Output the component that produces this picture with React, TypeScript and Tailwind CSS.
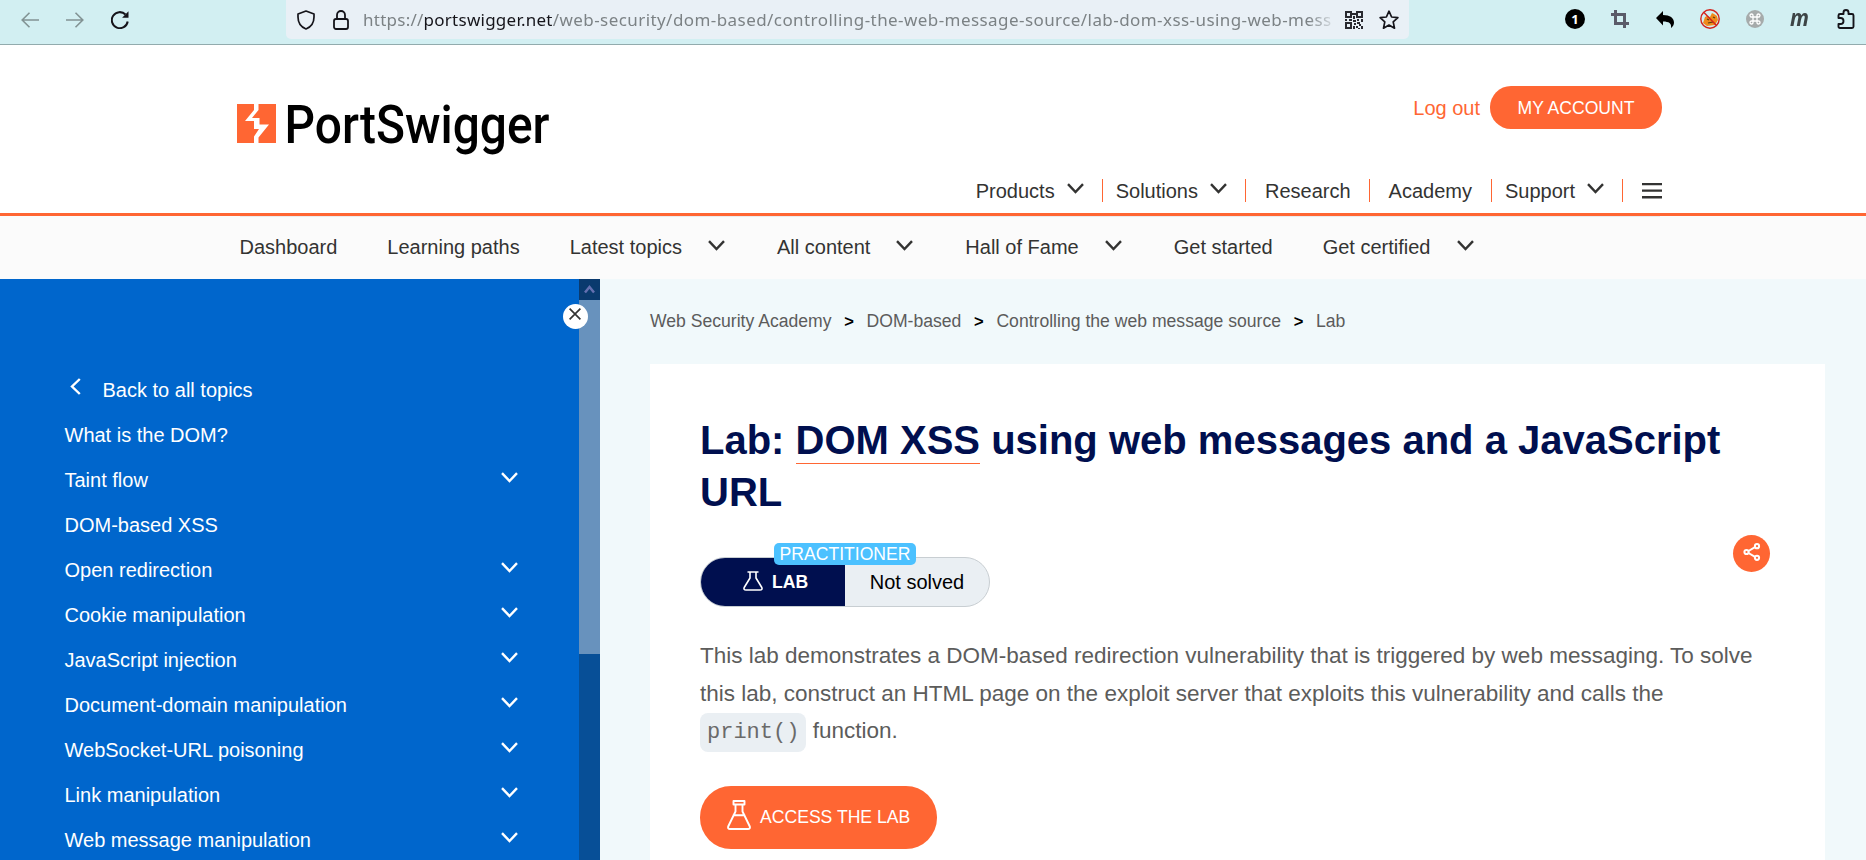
import React from "react";

const Chevron = ({ className = "" }: { className?: string }) => (
  <svg viewBox="0 0 17 11" className={`h-[11px] w-[17px] shrink-0 ${className}`} fill="none" stroke="currentColor" strokeWidth="2.4">
    <path d="M1 1.2 8.5 9 16 1.2" />
  </svg>
);

const Flask = () => (
  <svg viewBox="0 0 24 30" className="-mt-1 mr-[9px] h-[30px] w-6 shrink-0" fill="none" stroke="#fff" strokeWidth="1.9" strokeLinejoin="round">
    <path d="M6.5 1h11v3.500H6.500zM8.500 4.500v7L1.200 26.500Q.6 29 3 29h18q2.400 0 1.800-2.500L15.500 11.500v-7M5.800 15.300h12.400" />
  </svg>
);

const SmallFlask = () => (
  <svg viewBox="0 0 20 20" className="-mt-0.5 mr-[9px] h-5 w-5 shrink-0" fill="none" stroke="#fff" strokeWidth="1.6" strokeLinejoin="round">
    <path d="M4.500 1h11M7 1v6L1.200 16.500Q.3 19 3 19h14q2.700 0 1.800-2.500L13 7V1" />
  </svg>
);

const UrlBar = () => (
  <div className="ml-[157px] flex h-[39px] w-[1123px] items-center rounded-b-[5px] bg-[#e9f0f6] pl-[11px]">
    <svg viewBox="0 0 18 20" className="h-5 w-[18px] shrink-0" fill="none" stroke="#15141a" strokeWidth="1.700" strokeLinejoin="round">
      <path d="M9 1 17 4v3c0 6-3 10-8 12C4 17 1 13 1 7V4z" />
    </svg>
    <svg viewBox="0 0 16 20" className="ml-[18px] h-5 w-4 shrink-0" fill="none" stroke="#15141a" strokeWidth="1.800">
      <rect x="1" y="9" width="14" height="10" rx="2" />
      <path d="M4 9V5a4 4 0 0 1 8 0v4" />
    </svg>
    <div className="ml-[14px] w-[973px] shrink-0 overflow-hidden font-['Noto_Sans',sans-serif] text-[17px] leading-[39px] tracking-[0.43px] whitespace-nowrap text-[#7c8285] [mask-image:linear-gradient(to_right,black_945px,transparent_975px)]">
      <span className="tracking-[0.25px]">
        https://<span className="text-[#15141a]">portswigger.net</span>
      </span>
      /web-security/dom-based/controlling-the-web-message-source/lab-dom-xss-using-web-mess
    </div>
    <svg viewBox="0 0 18 18" className="ml-[9px] h-[18px] w-[18px] shrink-0" fill="#2a2a30">
      <path fillRule="evenodd" d="M0 0h7v7H0zM2 2v3h3V2zM11 0h7v7h-7zM13 2v3h3V2zM0 11h7v7H0zM2 13v3h3v-3zM7 2h4v2H7zM8 5h2v3H8zM0 8h2v2H0zM4 8h3v2H4zM8 9h3v2H8zM12 8h2v2h-2zM16 8h2v3h-2zM9 12h2v2H9zM12 11h3v2h-3zM8 15h2v3H8zM11 15h2v2h-2zM14 13h2v2h-2zM16 15h2v3h-2zM13 17h2v1h-2z" />
    </svg>
    <svg viewBox="0 0 20 20" className="ml-4 h-5 w-5 shrink-0" fill="none" stroke="#15141a" strokeWidth="1.700" strokeLinejoin="round">
      <path d="m10 1.200 2.600 5.800 6.300.7-4.700 4.200 1.300 6.300L10 15l-5.500 3.200 1.300-6.300L1.100 7.700 7.400 7z" />
    </svg>
  </div>
);

const BrowserBar = () => (
  <div className="flex h-[45px] shrink-0 items-start border-b border-[#92abad] bg-[#d2eff2]">
    <div className="flex h-10 items-center pl-[21px]">
      <svg viewBox="0 0 18 16" className="h-4 w-[18px]" fill="none" stroke="#829394" strokeWidth="1.600">
        <path d="M18 8H1M8.500.8 1.200 8l7.300 7.200" />
      </svg>
      <svg viewBox="0 0 18 16" className="ml-[27px] h-4 w-[18px]" fill="none" stroke="#829394" strokeWidth="1.600">
        <path d="M0 8h17M9.500.8 16.800 8l-7.300 7.200" />
      </svg>
      <svg viewBox="0 0 18 18" className="ml-[27px] h-[18px] w-[18px]" fill="none" stroke="#15141a" strokeWidth="2">
        <path d="M16.700 10.500A8 8 0 1 1 14.500 3.500" />
        <path d="M17.500.3v6.400h-6.400z" fill="#15141a" stroke="none" />
      </svg>
    </div>
    <UrlBar />
    <div className="flex h-[38px] items-center pl-[156px]">
      <svg viewBox="0 0 20 20" className="h-5 w-5">
        <circle cx="10" cy="10" r="10" fill="#000" />
        <text x="10" y="14.500" textAnchor="middle" fill="#fff" className="font-['Noto_Sans',sans-serif] text-[13px] font-bold">1</text>
      </svg>
      <svg viewBox="0 0 18 18" className="ml-[26px] h-[18px] w-[18px]" fill="none" stroke="#5a5b69" strokeWidth="3">
        <path d="M0 4.500h13.500V18M4.500 0v13.500H18" />
      </svg>
      <svg viewBox="0 0 18 17" className="ml-[27px] h-[17px] w-[18px]" fill="#000">
        <path d="M7 0v4c7 0 11 3 11 7.500 0 2-1 4-3 5.500.8-4.500-2-6.500-8-6.500v4L0 7z" />
      </svg>
      <svg viewBox="0 0 20 20" className="ml-[26px] h-5 w-5">
        <path d="M5 8l2-1 3 1 2-4 2 1 3 2 1 4-3 5-8 1-4-3z" fill="#ef8a1c" />
        <path d="M7 10l2 1M13 8l2 1M8 14l5-1" stroke="#5a3b12" strokeWidth="1.200" />
        <circle cx="10" cy="10" r="9.200" fill="none" stroke="#d3231c" strokeWidth="1.400" />
        <path d="m4 3.500 12.500 13" stroke="#d3231c" strokeWidth="1.400" />
      </svg>
      <svg viewBox="0 0 18 18" className="ml-[26px] h-[18px] w-[18px]">
        <circle cx="9" cy="9" r="9" fill="#a6abab" />
        <path d="M7 7H5.700A1.500 1.500 0 1 1 7 5.700v6.600A1.500 1.500 0 1 1 5.700 11h6.600a1.500 1.500 0 1 1-1.300 1.300V5.700A1.500 1.500 0 1 1 12.300 7z" fill="none" stroke="#fff" strokeWidth="1.300" />
      </svg>
      <span className="-mt-[5px] ml-[26px] w-[20px] font-['Open_Sans',sans-serif] text-[24px] leading-[30px] font-bold text-[#3d4446] italic">
        <span className="inline-block origin-left scale-x-[.87]">m</span>
      </span>
      <svg viewBox="0 0 18 20" className="ml-[26.500px] h-5 w-[18px]" fill="none" stroke="#15141a" strokeWidth="1.900" strokeLinejoin="round">
        <path d="M1.500 9V6.500q0-1.500 1.500-1.500h3.500V3.500a2.500 2.500 0 0 1 5 0V5H15q1.500 0 1.500 1.500v11q0 1.500-1.500 1.500H3q-1.500 0-1.500-1.500V15h2a2.800 2.800 0 0 0 0-6z" />
      </svg>
    </div>
  </div>
);

const Logo = () => (
  <svg viewBox="0 0 316 64" className="mt-[53px] h-[64px] w-[316px] overflow-visible" role="img">
    <rect x="0" y="6" width="39" height="39" fill="#ff6633" />
    <path d="M17 6h4.500v6L15 20h7.500v6.500H32L21.500 39.500V45H17v-6.500l5-7.500h-5v-8H8L17 12z" fill="#fff" />
    <text x="47.500" y="45" textLength="265" lengthAdjust="spacingAndGlyphs" className="font-[Roboto,sans-serif] text-[53.500px] font-medium" fill="#000">PortSwigger</text>
  </svg>
);

const Divider = () => <span className="h-[23px] w-px shrink-0 bg-[#ff6633]" />;

const Header = () => (
  <header className="flex h-[171px] shrink-0 justify-between border-b-[3px] border-[#ff6633] bg-white pr-[204px] pl-[237px]">
    <Logo />
    <div className="flex flex-col items-end">
      <div className="mt-[41px] flex items-center">
        <a className="text-[20px] text-[#ff6633]">Log out</a>
        <a className="ml-[10px] flex h-[43px] w-[172px] items-center justify-center rounded-[21px] bg-[#ff6633] pt-px text-[17.600px] text-white">MY ACCOUNT</a>
      </div>
      <nav className="mt-[50px] flex h-[23px] items-center text-[20px]">
        <span>Products</span>
        <Chevron className="-mt-1 mr-[18px] ml-[12px]" />
        <Divider />
        <span className="ml-[13px]">Solutions</span>
        <Chevron className="-mt-1 mr-[18px] ml-[12px]" />
        <Divider />
        <span className="mr-[18px] ml-[19px]">Research</span>
        <Divider />
        <span className="mx-[19px]">Academy</span>
        <Divider />
        <span className="ml-[13px]">Support</span>
        <Chevron className="-mt-1 mr-[18px] ml-[12px]" />
        <Divider />
        <svg viewBox="0 0 20 16" className="-mt-0 ml-[19px] h-4 w-5" fill="#333332">
          <path d="M0 0h20v2.200H0zM0 6.500h20v2.200H0zM0 13h20v2.500H0z" />
        </svg>
      </nav>
    </div>
  </header>
);

const subItems = [
  { label: "Dashboard", menu: false },
  { label: "Learning paths", menu: false },
  { label: "Latest topics", menu: true },
  { label: "All content", menu: true },
  { label: "Hall of Fame", menu: true },
  { label: "Get started", menu: false },
  { label: "Get certified", menu: true },
];

const SubNav = () => (
  <nav className="h-[63px] shrink-0 bg-[#fbfbfb] pr-[206px] pl-[239.500px]">
    <div className="flex h-[62px] items-center gap-[50px] border-t border-[#ebebee] pb-[2px] text-[20px]">
      {subItems.map((item) => (
        <span key={item.label} className="flex items-center whitespace-nowrap">
          {item.label}
          {item.menu && <Chevron className="-mt-0.5 mr-[2px] ml-[26px]" />}
        </span>
      ))}
    </div>
  </nav>
);

const topics = [
  { label: "What is the DOM?", open: false },
  { label: "Taint flow", open: true },
  { label: "DOM-based XSS", open: false },
  { label: "Open redirection", open: true },
  { label: "Cookie manipulation", open: true },
  { label: "JavaScript injection", open: true },
  { label: "Document-domain manipulation", open: true },
  { label: "WebSocket-URL poisoning", open: true },
  { label: "Link manipulation", open: true },
  { label: "Web message manipulation", open: true },
];

const Sidebar = () => (
  <aside className="relative flex w-[600px] shrink-0 bg-[#0066cc] text-[20px] text-white">
    <div className="flex-1 pt-[88px] pr-[61px] pl-[64.500px]">
      <div className="flex h-[45px] items-center">
        <svg viewBox="0 0 11 17" className="-mt-1.5 ml-[5px] h-[17px] w-[11px]" fill="none" stroke="#fff" strokeWidth="2.400">
          <path d="M9.800 1 2 8.500 9.800 16" />
        </svg>
        <span className="ml-[22px]">Back to all topics</span>
      </div>
      {topics.map((t) => (
        <div key={t.label} className="flex h-[45px] items-center justify-between">
          <span>{t.label}</span>
          {t.open && <Chevron className="-mt-1" />}
        </div>
      ))}
    </div>
    <div className="flex w-[21px] flex-col bg-[#074f97]">
      <div className="flex h-[21px] items-center justify-center bg-[#0a3a6e]">
        <svg viewBox="0 0 11 9" className="h-[9px] w-[11px]" fill="none" stroke="#6470b0" strokeWidth="2.500">
          <path d="M1 7.500 5.500 2 10 7.500" />
        </svg>
      </div>
      <div className="h-[354px] bg-[#6892bd]" />
    </div>
    <button className="absolute top-[25px] left-[563px] flex h-[25px] w-[25px] justify-center rounded-full bg-white pt-[4px]">
      <svg viewBox="0 0 12 12" className="-ml-px h-3 w-3" fill="none" stroke="#333332" strokeWidth="1.700">
        <path d="m.6.6 10.800 10.800M11.400.6.6 11.400" />
      </svg>
    </button>
  </aside>
);

const crumbs = ["Web Security Academy", "DOM-based", "Controlling the web message source", "Lab"];

const Main = () => (
  <main className="flex-1 bg-[#f1f9fb] pr-[41px] pl-[50px]">
    <div className="flex h-[85px] items-center text-[17.600px] text-[#5c5c5b]">
      {crumbs.map((c, i) => (
        <React.Fragment key={c}>
          {i > 0 && <span className="mx-[12px] w-[11px] text-center text-[16.500px] font-bold text-black">&gt;</span>}
          <span className="whitespace-nowrap">{c}</span>
        </React.Fragment>
      ))}
    </div>
    <article className="h-[500px] bg-white px-[50px] pt-[50px]">
      <h1 className="text-[40px] leading-[52px] font-bold text-[#000f4f]">
        Lab: <span className="border-b border-[#ff6633] pb-px">DOM XSS</span> using web messages and a JavaScript URL
      </h1>
      <div className="mt-[17px] flex items-start justify-between">
        <div className="relative mt-[22px] flex h-[50px] w-[290px] rounded-full border border-[#c8ced2] bg-[#eaeff3]">
          <div className="flex w-[144px] items-center rounded-l-full bg-[#000f4f] pl-[42px] text-[17.600px] font-bold text-white">
            <SmallFlask />
            <span className="pt-px">LAB</span>
          </div>
          <span className="flex flex-1 items-center justify-center text-[20px] text-black">Not solved</span>
          <span className="absolute -top-[15px] left-[73px] flex h-[22px] w-[142px] items-center justify-center rounded-[5px] bg-[#4cc1ff] pt-px text-[17.600px] leading-none text-white">PRACTITIONER</span>
        </div>
        <button className="mr-[5px] flex h-[37px] w-[37px] justify-center rounded-full bg-[#ff6633] pt-2">
          <svg viewBox="0 0 18 18" className="h-[18px] w-[18px]" fill="none" stroke="#fff" strokeWidth="2">
            <circle cx="3.500" cy="9" r="2.100" />
            <circle cx="14" cy="3.200" r="2.100" />
            <circle cx="14" cy="14.800" r="2.100" />
            <path d="M5.500 8 12 4.200M5.500 10l6.500 3.800" />
          </svg>
        </button>
      </div>
      <p className="mt-[30px] text-[22.500px] leading-[37.500px] text-[#5c5c5b]">
        This lab demonstrates a DOM-based redirection vulnerability that is triggered by web messaging. To solve this lab, construct an HTML page on the exploit server that exploits this vulnerability and calls the{" "}
        <code className="rounded-[8px] bg-[#eaeff3] px-[7px] py-[7px] font-['Liberation_Mono',monospace] text-[22px] text-[#6a6a6a]">print()</code> function.
      </p>
      <button className="mt-[34px] flex h-[63px] w-[237px] items-center rounded-[31px] bg-[#ff6633] pl-[27px] text-[17.600px] text-white">
        <Flask />
        ACCESS THE LAB
      </button>
    </article>
  </main>
);

export default function App() {
  return (
    <div className="flex h-[860px] w-[1866px] flex-col overflow-hidden bg-white font-['Liberation_Sans',Arial,sans-serif] text-[#333332]">
      <BrowserBar />
      <Header />
      <SubNav />
      <div className="flex min-h-0 flex-1">
        <Sidebar />
        <Main />
      </div>
    </div>
  );
}
